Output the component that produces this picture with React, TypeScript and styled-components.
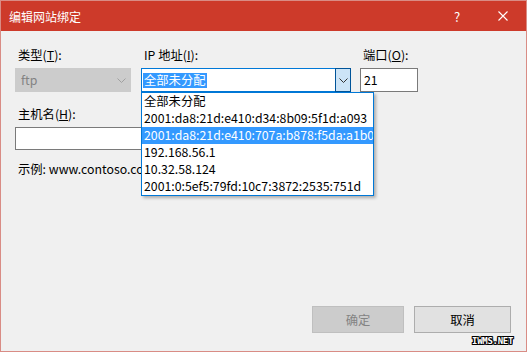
import React from "react";
import styled, { createGlobalStyle } from "styled-components";

const Global = createGlobalStyle`
  html, body { margin: 0; padding: 0; background: #f0f0f0; }
  body { font-family: "Noto Sans CJK SC", "Noto Sans", sans-serif; font-size: 12.3px; color: #000; }
  * { box-sizing: border-box; }
`;

const Window = styled.div`
  width: 527px;
  height: 352px;
  border: 1px solid #d98c85;
  display: flex;
  flex-direction: column;
  background: #f0f0f0;
  position: relative;
`;

const TitleBar = styled.div`
  height: 30px;
  background: #cd3a2a;
  color: #fff;
  display: flex;
  align-items: center;
  padding-left: 8px;
  font-size: 12px;
`;

const TitleText = styled.div`
  flex: 1;
`;

const TitleButton = styled.div`
  width: 46px;
  height: 30px;
  display: flex;
  align-items: center;
  justify-content: center;
  color: #fff;
  font-size: 13px;
`;

const Body = styled.div`
  flex: 1;
  display: flex;
  flex-direction: column;
  padding: 15px 15px 18px 14px;
`;

const TopRow = styled.div`
  display: flex;
`;

const Field = styled.div<{ $w: number; $ml?: number }>`
  width: ${(p) => p.$w}px;
  margin-left: ${(p) => p.$ml ?? 0}px;
  display: flex;
  flex-direction: column;
  position: relative;
`;

const Label = styled.div`
  height: 18px;
  line-height: 18px;
  padding-left: 3px;
  margin-bottom: 4px;
  white-space: nowrap;
`;

const Combo = styled.div<{ $disabled?: boolean; $focused?: boolean }>`
  height: 24px;
  display: flex;
  align-items: center;
  background: ${(p) => (p.$disabled ? "#cccccc" : "#fff")};
  border: 1px solid ${(p) => (p.$disabled ? "#cccccc" : p.$focused ? "#0078d7" : "#7a7a7a")};
  color: ${(p) => (p.$disabled ? "#838383" : "#000")};
`;

const ComboText = styled.div<{ $pl: number }>`
  flex: 1;
  padding-left: ${(p) => p.$pl}px;
  white-space: nowrap;
`;

const Selected = styled.span`
  background: #3399ff;
  color: #fff;
  padding: 0 1px;
  line-height: 15px;
  display: inline-block;
`;

const ArrowBox = styled.div<{ $active?: boolean }>`
  width: 16px;
  height: ${(p) => (p.$active ? "24px" : "22px")};
  margin-right: ${(p) => (p.$active ? "-1px" : "1px")};
  display: flex;
  align-items: center;
  justify-content: center;
  background: ${(p) => (p.$active ? "#cce4f7" : "transparent")};
  border: ${(p) => (p.$active ? "1px solid #005499" : "none")};
`;

const TextInput = styled.div<{ $h: number }>`
  height: ${(p) => p.$h}px;
  background: #fff;
  border: 1px solid #7a7a7a;
  display: flex;
  align-items: center;
  padding-left: 3px;
`;

const DropList = styled.div`
  position: absolute;
  top: 100%;
  left: 0;
  width: 233px;
  background: #fff;
  border: 1px solid #0078d7;
  box-shadow: 2px 2px 3px rgba(0, 0, 0, 0.28);
  z-index: 5;
`;

const Item = styled.div<{ $sel?: boolean }>`
  height: 17px;
  line-height: 17px;
  padding-left: 2px;
  white-space: nowrap;
  overflow: hidden;
  background: ${(p) => (p.$sel ? "#3399ff" : "transparent")};
  color: ${(p) => (p.$sel ? "#fff" : "#000")};
`;

const HostBlock = styled.div`
  margin-top: 13px;
  width: 336px;
  display: flex;
  flex-direction: column;
`;

const Example = styled.div`
  margin-top: 10px;
  padding-left: 3px;
  width: 126px;
  white-space: nowrap;
  overflow: hidden;
`;

const Spacer = styled.div`
  flex: 1;
`;

const ButtonRow = styled.div`
  display: flex;
  justify-content: flex-end;
  gap: 10px;
`;

const Button = styled.div<{ $w: number; $disabled?: boolean }>`
  width: ${(p) => p.$w}px;
  height: 27px;
  display: flex;
  align-items: center;
  justify-content: center;
  background: ${(p) => (p.$disabled ? "#cccccc" : "#e1e1e1")};
  border: 1px solid ${(p) => (p.$disabled ? "#bfbfbf" : "#adadad")};
  color: ${(p) => (p.$disabled ? "#838383" : "#000")};
`;

const Watermark = styled.div`
  position: absolute;
  right: 13px;
  bottom: 5px;
  font-family: "DejaVu Sans Mono", monospace;
  font-weight: bold;
  font-size: 9px;
  letter-spacing: -0.3px;
  color: #fff;
  text-shadow: 1px 0 0 #000, -1px 0 0 #000, 0 1px 0 #000, 0 -1px 0 #000, 1px 1px 0 #000, -1px -1px 0 #000, 1px -1px 0 #000, -1px 1px 0 #000;
`;

const U = styled.span`
  text-decoration: underline;
`;

const Chevron: React.FC<{ color: string }> = ({ color }) => (
  <svg width="9" height="5" viewBox="0 0 9 5">
    <path d="M0.5 0.5 L4.5 4.5 L8.5 0.5" fill="none" stroke={color} strokeWidth="1" />
  </svg>
);

const CloseIcon = () => (
  <svg width="10" height="10" viewBox="0 0 10 10">
    <path d="M0.5 0.5 L9.5 9.5 M9.5 0.5 L0.5 9.5" stroke="#fff" strokeWidth="1.1" />
  </svg>
);

const items = [
  "全部未分配",
  "2001:da8:21d:e410:d34:8b09:5f1d:a093",
  "2001:da8:21d:e410:707a:b878:f5da:a1b0",
  "192.168.56.1",
  "10.32.58.124",
  "2001:0:5ef5:79fd:10c7:3872:2535:751d",
];

export default function App() {
  return (
    <>
      <Global />
      <Window>
        <TitleBar>
          <TitleText>编辑网站绑定</TitleText>
          <TitleButton>?</TitleButton>
          <TitleButton>
            <CloseIcon />
          </TitleButton>
        </TitleBar>
        <Body>
          <TopRow>
            <Field $w={116}>
              <Label>
                类型(<U>T</U>):
              </Label>
              <Combo $disabled>
                <ComboText $pl={5}>ftp</ComboText>
                <ArrowBox>
                  <Chevron color="#a0a0a0" />
                </ArrowBox>
              </Combo>
            </Field>
            <Field $w={210} $ml={10}>
              <Label>
                IP 地址(<U>I</U>):
              </Label>
              <Combo $focused>
                <ComboText $pl={1}>
                  <Selected>全部未分配</Selected>
                </ComboText>
                <ArrowBox $active>
                  <Chevron color="#333" />
                </ArrowBox>
              </Combo>
              <DropList>
                {items.map((t, i) => (
                  <Item key={t} $sel={i === 2}>
                    {t}
                  </Item>
                ))}
              </DropList>
            </Field>
            <Field $w={58} $ml={9}>
              <Label>
                端口(<U>O</U>):
              </Label>
              <TextInput $h={24}>21</TextInput>
            </Field>
          </TopRow>
          <HostBlock>
            <Label>
              主机名(<U>H</U>):
            </Label>
            <TextInput $h={23} />
          </HostBlock>
          <Example>示例: www.contoso.com 或 marketing.contoso.com</Example>
          <Spacer />
          <ButtonRow>
            <Button $w={92} $disabled>
              确定
            </Button>
            <Button $w={97}>取消</Button>
          </ButtonRow>
        </Body>
        <Watermark>IWMS.NET</Watermark>
      </Window>
    </>
  );
}
